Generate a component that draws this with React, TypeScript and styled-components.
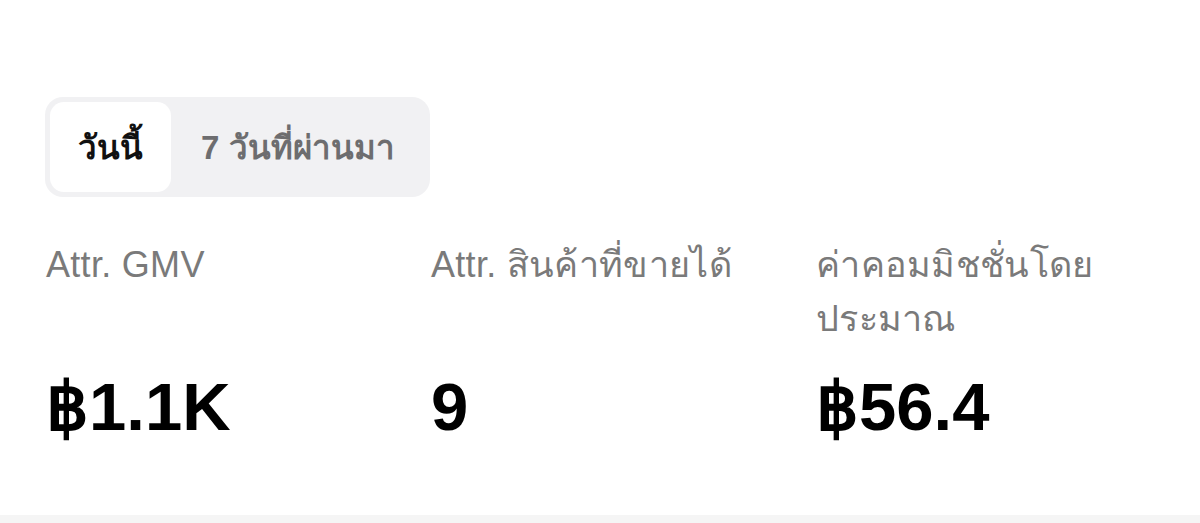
import styled, { createGlobalStyle } from 'styled-components'

const ranges = ['วันนี้', '7 วันที่ผ่านมา']

const metrics = [
    { label: 'Attr. GMV', value: '฿1.1K' },
    { label: 'Attr. สินค้าที่ขายได้', value: '9' },
    { label: 'ค่าคอมมิชชั่นโดยประมาณ', value: '฿56.4' }
]

export default function App() {
    return (
        <>
            <GlobalStyle />
            <Page>
                <Panel>
                    <Segmented>
                        {ranges.map((r, i) => (
                            <SegmentTab key={r} $active={i === 0}>{r}</SegmentTab>
                        ))}
                    </Segmented>
                    <StatsGrid>
                        {metrics.map(m => (
                            <Stat key={m.label}>
                                <StatLabel>{m.label}</StatLabel>
                                <StatValue>{m.value}</StatValue>
                            </Stat>
                        ))}
                    </StatsGrid>
                </Panel>
                <Divider />
            </Page>
        </>
    )
}

const GlobalStyle = createGlobalStyle`
    html, body {
        margin: 0;
        padding: 0;
        background: #fff;
    }
    body {
        font-family: "Liberation Sans", "Noto Sans", sans-serif;
        -webkit-font-smoothing: antialiased;
    }
`

const Page = styled.div`
    width: 1200px;
    height: 523px;
    display: flex;
    flex-direction: column;
    overflow: hidden;
`

const Panel = styled.section`
    height: 515px;
    box-sizing: border-box;
    padding: 97px 12px 0 46px;
    display: flex;
    flex-direction: column;
    align-items: flex-start;
    gap: 41px;
`

const Segmented = styled.div`
    display: flex;
    align-items: stretch;
    width: 385px;
    height: 100px;
    box-sizing: border-box;
    padding: 5px;
    margin-left: -1px;
    border-radius: 18px;
    background: #f1f1f3;
`

const SegmentTab = styled.div<{ $active?: boolean }>`
    display: flex;
    align-items: center;
    justify-content: center;
    padding: 0 ${({ $active }) => ($active ? '28px' : '30px')};
    border-radius: 14px;
    font-size: 33px;
    font-weight: 700;
    color: ${({ $active }) => ($active ? '#111' : '#6d6d6f')};
    background: ${({ $active }) => ($active ? '#fff' : 'transparent')};
`

const StatsGrid = styled.div`
    display: grid;
    grid-template-columns: repeat(3, 370px);
    column-gap: 15px;
    grid-template-rows: auto auto;
`

const Stat = styled.div`
    display: grid;
    grid-row: span 2;
    grid-template-rows: subgrid;
    row-gap: 27px;
`

const StatLabel = styled.div`
    font-size: 36px;
    line-height: 54px;
    color: #7a7a7a;
    letter-spacing: 0.3px;
`

const StatValue = styled.div`
    font-size: 67px;
    line-height: 1;
    font-weight: 700;
    color: #000;
`

const Divider = styled.div`
    flex: 1;
    background: #f5f5f5;
`
